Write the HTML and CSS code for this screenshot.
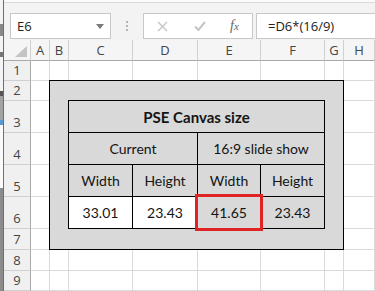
FILE: index.html
```html
<!DOCTYPE html>
<html lang="en">
<head>
    <meta charset="UTF-8">
    <meta name="viewport" content="width=device-width, initial-scale=1.0">
    <title>PSE Canvas size</title>
    <link rel="stylesheet" href="styles.css">
</head>
<body>
    <div class="window">
        <div class="edge"></div>

        <div class="excel">
            <div class="titlebar"></div>

            <!-- name box + formula bar -->
            <div class="formula-bar">
                <div class="name-box">
                    <span>E6</span>
                    <svg class="caret" width="8" height="5" viewBox="0 0 8 5"><path d="M0 0h8L4 5z" fill="#7a7a7a"/></svg>
                </div>
                <div class="grip"><i></i><i></i><i></i></div>
                <div class="fx-box">
                    <svg class="btn-cancel" width="11" height="11" viewBox="0 0 11 11"><path d="M1 1l9 9M10 1l-9 9" stroke="#c4c4c4" stroke-width="1.4" fill="none"/></svg>
                    <svg class="btn-enter" width="12" height="10" viewBox="0 0 12 10"><path d="M1 5.5l3.5 3.5L11 1" stroke="#c4c4c4" stroke-width="2" fill="none"/></svg>
                    <span class="fx">f<small>x</small></span>
                </div>
                <div class="formula">=D6*(16/9)</div>
            </div>

            <!-- worksheet -->
            <div class="sheet">
                <div class="corner">
                    <svg width="12" height="11" viewBox="0 0 12 11"><path d="M12 0v11H0z" fill="#c3c3c3"/></svg>
                </div>
                <div class="col-head">A</div>
                <div class="col-head">B</div>
                <div class="col-head">C</div>
                <div class="col-head">D</div>
                <div class="col-head">E</div>
                <div class="col-head">F</div>
                <div class="col-head">G</div>
                <div class="col-head">H</div>

                <div class="row-head">1</div>
                <div class="cell"></div><div class="cell"></div><div class="cell"></div><div class="cell"></div>
                <div class="cell"></div><div class="cell"></div><div class="cell"></div><div class="cell"></div>

                <div class="row-head">2</div><div class="cell"></div><div class="cell"></div>
                <div class="row-head">3</div><div class="cell"></div><div class="cell"></div>
                <div class="row-head">4</div><div class="cell"></div><div class="cell"></div>
                <div class="row-head">5</div><div class="cell"></div><div class="cell"></div>
                <div class="row-head">6</div><div class="cell"></div><div class="cell"></div>
                <div class="row-head">7</div><div class="cell"></div><div class="cell"></div>

                <div class="row-head">8</div>
                <div class="cell"></div><div class="cell"></div><div class="cell"></div><div class="cell"></div>
                <div class="cell"></div><div class="cell"></div><div class="cell"></div><div class="cell"></div>

                <div class="row-head">9</div>
                <div class="cell"></div><div class="cell"></div><div class="cell"></div><div class="cell"></div>
                <div class="cell"></div><div class="cell"></div><div class="cell"></div><div class="cell"></div>

                <!-- B2:G7 gray box with the size table in C3:F6 -->
                <div class="panel">
                    <div class="canvas-table">
                        <div class="tc title">PSE Canvas size</div>
                        <div class="tc group">Current</div>
                        <div class="tc group">16:9 slide show</div>
                        <div class="tc">Width</div>
                        <div class="tc">Height</div>
                        <div class="tc">Width</div>
                        <div class="tc">Height</div>
                        <div class="tc value">33.01</div>
                        <div class="tc value">23.43</div>
                        <div class="tc picked">41.65</div>
                        <div class="tc">23.43</div>
                    </div>
                </div>
            </div>
        </div>
    </div>
</body>
</html>
```

FILE: styles.css
```css
* {
    margin: 0;
    padding: 0;
    box-sizing: border-box;
}

body {
    width: 375px;
    height: 291px;
    overflow: hidden;
    background-color: #fff;
    font-family: 'Open Sans', 'Noto Sans', sans-serif;
    color: #222;
}

.window {
    display: flex;
    height: 291px;
}

/* sliver of the window behind */
.edge {
    width: 4px;
    flex-shrink: 0;
    border-right: 1px solid #6f6f6f;
    background: linear-gradient(to bottom,
        #f4f4f4 0 24px, #8a8a8a 24px 36px, #f4f4f4 36px 52px, #777 52px 57px,
        #f4f4f4 57px 91px, #555 91px 96px, #a3a3a3 96px 120px, #5b9bd5 120px 125px,
        #fafafa 125px 188px, #8c8c8c 188px 291px);
}

.excel {
    flex: 1;
    display: flex;
    flex-direction: column;
    min-width: 0;
}

.titlebar {
    height: 4px;
    background-color: #fbfbfb;
    border-bottom: 1px solid #dcdcdc;
}

.formula-bar {
    height: 46px;
    background-color: #f3f3f3;
    display: flex;
    align-items: flex-start;
    padding: 10px 0 0 6px;
}

.name-box {
    width: 101px;
    height: 26px;
    background-color: #fff;
    border: 1px solid #c8c8c8;
    display: flex;
    align-items: center;
    justify-content: space-between;
    padding: 0 6px 0 6px;
    font-size: 13px;
    color: #222;
}

.caret {
    margin-top: 1px;
}

.grip {
    width: 32px;
    height: 26px;
    display: flex;
    flex-direction: column;
    align-items: center;
    justify-content: center;
    gap: 2px;
}

.grip i {
    width: 2px;
    height: 2px;
    background-color: #b5b5b5;
}

.fx-box {
    width: 110px;
    height: 26px;
    background-color: #fff;
    border: 1px solid #c8c8c8;
    display: flex;
    align-items: center;
    padding-left: 13px;
}

.btn-cancel {
    margin-right: 26px;
}

.btn-enter {
    margin-right: 24px;
}

.fx {
    font-family: 'Liberation Serif', serif;
    font-style: italic;
    font-size: 14px;
    color: #666;
}

.fx small {
    font-size: 11px;
}

.formula {
    flex: 1;
    height: 26px;
    margin-left: 3px;
    background-color: #fff;
    border: 1px solid #c8c8c8;
    border-right: none;
    padding-left: 11px;
    font-size: 13px;
    line-height: 24px;
    color: #222;
}

/* worksheet grid */
.sheet {
    flex: 1;
    display: grid;
    grid-template-columns: 27px 19px 19px 64px 65px 63px 64px 19px 1fr;
    grid-template-rows: 21px 20px 20px 32px 32px 32px 32px 21px 21px 20px;
}

.corner,
.col-head {
    background-color: #f5f5f5;
    border-right: 1px solid #d0d0d0;
    border-bottom: 1px solid #a9a9a9;
}

.corner {
    display: flex;
    align-items: flex-end;
    justify-content: flex-end;
    padding: 0 3px 3px 0;
}

.col-head {
    display: flex;
    align-items: center;
    justify-content: center;
    font-size: 13px;
    color: #444;
}

.row-head {
    background-color: #f0f0f0;
    border-right: 1px solid #a9a9a9;
    border-bottom: 1px solid #d0d0d0;
    display: flex;
    align-items: flex-end;
    justify-content: center;
    padding-bottom: 2px;
    font-size: 13px;
    line-height: 16px;
    color: #444;
}

.cell {
    border-right: 1px solid #dadada;
    border-bottom: 1px solid #dadada;
}

.panel {
    grid-column: 3 / 9;
    grid-row: 3 / 9;
    margin: -1px 0 0 -1px;
    border: 1px solid #000;
    background-color: #d9d9d9;
    padding: 19px 18px 20px 18px;
}

.canvas-table {
    display: grid;
    grid-template-columns: 63px 64px 62px 63px;
    grid-template-rows: repeat(4, 31px);
    gap: 1px;
    background-color: #000;
    border: 1px solid #000;
}

.tc {
    background-color: #d9d9d9;
    display: flex;
    align-items: center;
    justify-content: center;
    font-family: Lato, 'Open Sans', sans-serif;
    font-size: 14px;
    color: #141414;
}

.tc.title {
    grid-column: 1 / -1;
    font-weight: 700;
    font-size: 15px;
}

.tc.group {
    grid-column: span 2;
}

.tc.value {
    background-color: #fff;
}

.tc.picked {
    position: relative;
}

/* red highlight drawn over the E6 cell */
.tc.picked::after {
    content: '';
    position: absolute;
    inset: -3px;
    border: 3px solid #e02424;
}
```
